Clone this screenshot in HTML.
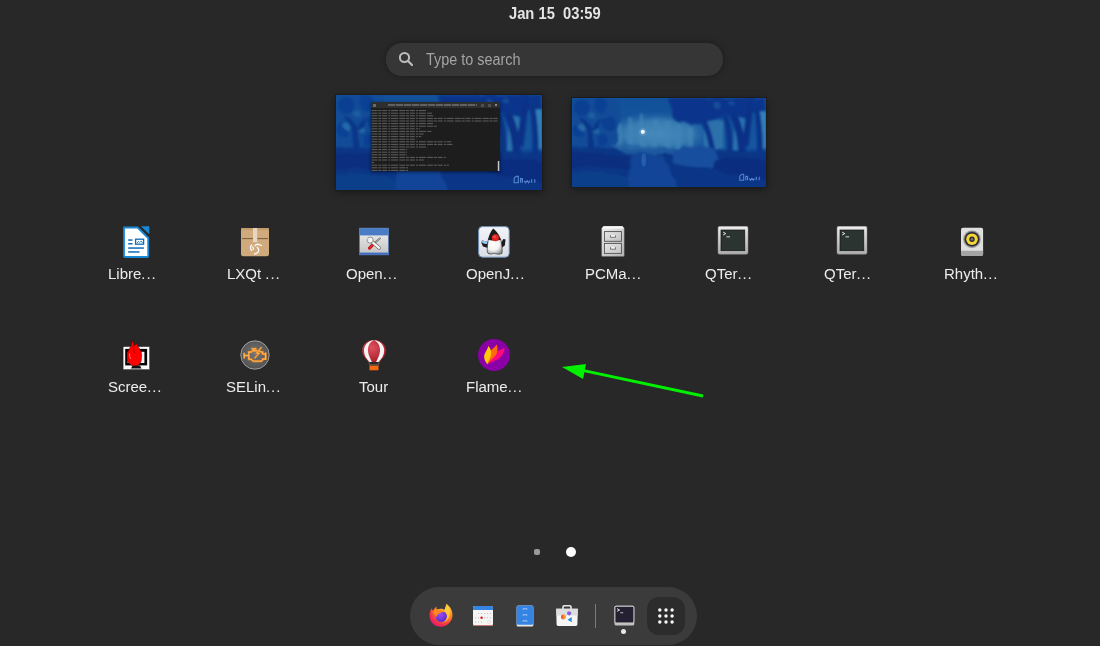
<!DOCTYPE html>
<html><head><meta charset="utf-8">
<style>
html,body{margin:0;padding:0;}
body{width:1100px;height:646px;background:#282828;position:relative;overflow:hidden;font-family:"Liberation Sans",sans-serif;}
.abs{position:absolute;}
#clock{position:absolute;left:508.5px;top:4px;color:#e4e4e4;font-weight:bold;font-size:16px;line-height:20px;white-space:pre;transform:scaleX(0.92);transform-origin:0 0;}
#search{position:absolute;left:385px;top:42px;width:337px;height:33px;border-radius:17px;background:#363636;border:1px solid #222;box-shadow:0 0 6px rgba(0,0,0,0.25);}
#search .ph{position:absolute;left:40px;top:7.8px;color:#a4a4a4;font-size:16px;line-height:18px;white-space:nowrap;transform:scaleX(0.9);transform-origin:0 0;}
.ws{position:absolute;overflow:hidden;outline:1px solid #1c1c1c;box-shadow:0 2px 8px rgba(0,0,0,0.45);}
.lbl{position:absolute;color:#ececec;font-size:15.5px;line-height:16px;white-space:nowrap;transform:scaleX(0.968);transform-origin:0 0;}
.ic{position:absolute;width:32px;height:32px;}
#dock{position:absolute;left:410px;top:587px;width:287px;height:58px;border-radius:29px;background:#3b3b3b;}
</style></head><body>
<div id="clock">Jan 15  03:59</div>
<div id="search">
  <svg class="abs" style="left:10px;top:7px" width="20" height="20" viewBox="0 0 20 20"><circle cx="8.5" cy="7.5" r="4.6" fill="none" stroke="#bdbdbd" stroke-width="2"/><line x1="11.8" y1="10.8" x2="16" y2="15" stroke="#bdbdbd" stroke-width="2.2" stroke-linecap="round"/></svg>
  <div class="ph">Type to search</div>
</div>

<!-- workspace thumbnails -->
<div class="ws" id="ws1" style="left:336px;top:95px;width:206px;height:95px;background:#1a4fb0;"><svg width="100%" height="100%" viewBox="0 0 200 92" preserveAspectRatio="none" style="position:absolute;left:0;top:0">
<defs>
<linearGradient id="WG" x1="0" y1="0" x2="0" y2="1"><stop offset="0" stop-color="#1660b0"/><stop offset="0.55" stop-color="#1a66b4"/><stop offset="0.62" stop-color="#0d44a0"/><stop offset="1" stop-color="#0a3c98"/></linearGradient>
<radialGradient id="WM" cx="0.5" cy="0.5" r="0.5"><stop offset="0" stop-color="#5aa8da"/><stop offset="0.6" stop-color="#4294cc"/><stop offset="1" stop-color="#2a74bc" stop-opacity="0"/></radialGradient>
<filter id="WD" x="-5%" y="-5%" width="110%" height="110%"><feTurbulence type="fractalNoise" baseFrequency="0.09" numOctaves="2" seed="3"/><feDisplacementMap in="SourceGraphic" scale="6"/><feGaussianBlur stdDeviation="1.1"/></filter>
<filter id="WB" x="-5%" y="-5%" width="110%" height="110%"><feGaussianBlur stdDeviation="1"/></filter>
<filter id="WC"><feGaussianBlur stdDeviation="0.5"/></filter>
</defs>
<rect width="200" height="92" fill="url(#WG)"/>
<g filter="url(#WB)">
<ellipse cx="88" cy="37" rx="58" ry="23" fill="url(#WM)"/>
<g fill="#52a0d4" opacity="0.7"><path d="M46 26 h5 l1 28 h-7z"/><path d="M58 20 h4 l1 34 h-6z"/><path d="M70 16 h3 l2 38 h-6z"/><path d="M84 22 h4 v32 h-5z"/><path d="M96 24 h5 v30 h-6z"/><path d="M108 28 h4 l1 26 h-6z"/><path d="M120 30 h5 v24 h-6z"/></g>
</g>
<g filter="url(#WD)">
<path d="M0 0 H44 C50 8 52 18 48 28 C46 38 50 46 44 52 C36 56 24 54 16 56 C8 56 2 54 0 52 Z" fill="#1358ac"/>
<circle cx="10" cy="10" r="8" fill="#0e4aa6"/><circle cx="30" cy="8" r="7" fill="#0f4ca8"/><circle cx="38" cy="26" r="7" fill="#0e48a6"/><circle cx="6" cy="34" r="6" fill="#0f4ca8"/><circle cx="32" cy="44" r="6" fill="#0f4aa8"/>
<circle cx="11" cy="31" r="3" fill="#2f80c4"/><circle cx="25" cy="34" r="3" fill="#2c7cc2"/><circle cx="20" cy="18" r="3.5" fill="#246eb8"/>
<path d="M16 36 L17 60 H23 L22 36 C25 30 28 26 32 24 L31 22 C26 24 22 28 20 31 C18 26 14 22 9 20 L8 22 C12 25 15 30 16 36 Z" fill="#0a3c9a"/>
<path d="M100 0 H200 V12 C194 14 188 16 184 16 C176 20 166 20 158 18 C148 22 138 28 128 28 C118 28 108 22 104 14 C100 8 100 4 100 0 Z" fill="#0b3e9e"/>
<circle cx="112" cy="16" r="9" fill="#0b3e9e"/><circle cx="140" cy="20" r="8" fill="#0b3e9e"/><circle cx="178" cy="14" r="7" fill="#0b3e9e"/>
<circle cx="150" cy="8" r="3" fill="#1e5cb0"/><circle cx="165" cy="6" r="2.5" fill="#1e5cb0"/>
</g>
<g filter="url(#WB)">
<path d="M136 26 C142 22 150 22 156 24 L156 52 L136 54 Z" fill="#3a8cc8" opacity="0.9"/>
<path d="M168 22 C172 20 176 20 178 22 L178 54 L166 54 Z" fill="#3a8ecc" opacity="0.85"/>
<path d="M190 14 H200 V52 H192 Z" fill="#3c9ad6"/>
<path d="M130 20 C136 28 142 46 144 72 H150 C148 46 142 28 136 18 Z" fill="#0a3b9c"/>
<path d="M154 16 C158 26 160 40 160 60 L166 60 C166 40 164 26 160 16 Z" fill="#0b3c9c"/>
<path d="M162 18 C168 28 172 44 172 72 H180 C180 46 176 28 170 16 Z" fill="#0a3898"/>
<path d="M182 6 C180 20 176 32 176 50 L182 50 C184 32 186 20 186 6 Z" fill="#0a3898"/>
<path d="M188 10 C190 26 192 48 190 76 H196 C198 48 196 26 193 10 Z" fill="#0b3a9a"/>
</g>
<g filter="url(#WD)">
<path d="M-4 52 C20 50 40 52 62 54 C84 52 106 52 130 56 C160 54 182 56 204 58 V96 H-4 Z" fill="#0b3c96"/>
<path d="M40 50 C60 48 80 50 100 52 C110 54 120 54 130 56 C110 58 80 58 56 58 Z" fill="#2a74bc" opacity="0.8"/>
<path d="M-4 58 C24 54 46 58 62 62 L58 74 C40 70 20 70 -4 72 Z" fill="#08348c"/>
<path d="M62 58 C72 56 86 58 94 60 C98 68 104 80 110 96 H54 C60 80 62 68 62 58 Z" fill="#1550ac"/>
<path d="M104 54 C116 50 132 48 146 52 C150 60 150 66 146 72 C132 74 118 72 104 68 Z" fill="#1e5cb4"/>
<path d="M146 62 C168 60 188 62 204 66 V86 C184 84 166 80 146 74 Z" fill="#08328e"/>
<path d="M-4 78 C20 74 40 76 58 82 L60 96 H-4 Z" fill="#0f4a9a"/>
<path d="M110 80 C140 78 170 82 204 86 V96 H112 Z" fill="#0b3c98"/>
</g>
<rect width="200" height="92" fill="#061a48" opacity="0.2"/>
<g filter="url(#WC)">
<ellipse cx="74" cy="64" rx="2.5" ry="7" fill="#3e84c8" opacity="0.4"/>
<circle cx="73" cy="35" r="2.1" fill="#f4f8ff"/>
</g>
<circle cx="73" cy="35" r="4" fill="#ffffff" opacity="0.12"/>
<g fill="none" stroke="#5f90dc" stroke-width="1.1" opacity="0.9"><path d="M173 85 V80.5 L175 78.8 H177 V85 Z"/><path d="M179.2 85 V81 H181 V85"/><path d="M182.8 83 L184 85 L185.5 83 L187 85 L188.2 83"/><path d="M190 85 V81.5 M193 85 V81.5"/></g>
</svg><div style="position:absolute;left:34.5px;top:7px;width:129px;height:69px;background:#1d1d1d;box-shadow:0 1px 3px rgba(0,0,0,0.6);">
<div style="position:absolute;left:0;top:0;width:129px;height:6px;background:#2e2e2e"></div>
<div style="position:absolute;left:17.3px;top:2.4px;width:89.4px;height:1.2px;background:repeating-linear-gradient(90deg,#6a6a6a 0 7px,#3e3e3e 7px 8px);opacity:0.85"></div>
<div style="position:absolute;left:2.3px;top:1.5px;width:3px;height:3px;background:#6a6a6a"></div>
<div style="position:absolute;left:110.5px;top:1.5px;width:3px;height:3px;background:#505050"></div>
<div style="position:absolute;left:117.2px;top:1.5px;width:3px;height:3px;background:#505050"></div>
<div style="position:absolute;left:124px;top:2px;width:2px;height:2px;background:#888"></div>
<svg style="position:absolute;left:0;top:6px" width="129" height="63" viewBox="0 0 129 63">
<g stroke="#8a8a8a" stroke-width="1" opacity="0.6" stroke-dasharray="6 0.8 3 0.8 5 1.2 2 0.8 7 1.2"><line x1="0.5" y1="2.6" x2="56.3" y2="2.6"/><line x1="0.5" y1="5.2" x2="61.0" y2="5.2"/><line x1="0.5" y1="7.8" x2="62.3" y2="7.8"/><line x1="0.5" y1="10.4" x2="126.5" y2="10.4"/><line x1="0.5" y1="13.0" x2="126.5" y2="13.0"/><line x1="0.5" y1="15.6" x2="62.3" y2="15.6"/><line x1="0.5" y1="18.2" x2="66.5" y2="18.2"/><line x1="0.5" y1="20.8" x2="49.0" y2="20.8"/><line x1="0.5" y1="23.4" x2="60.5" y2="23.4"/><line x1="0.5" y1="26.0" x2="52.7" y2="26.0"/><line x1="0.5" y1="28.6" x2="50.3" y2="28.6"/><line x1="0.5" y1="31.2" x2="45.5" y2="31.2"/><line x1="0.5" y1="33.8" x2="80.3" y2="33.8"/><line x1="0.5" y1="36.4" x2="81.5" y2="36.4"/><line x1="0.5" y1="39.0" x2="56.3" y2="39.0"/><line x1="0.5" y1="41.6" x2="36.0" y2="41.6"/><line x1="0.5" y1="44.2" x2="36.0" y2="44.2"/><line x1="0.5" y1="46.8" x2="36.0" y2="46.8"/><line x1="0.5" y1="49.4" x2="75.5" y2="49.4"/><line x1="0.5" y1="52.0" x2="52.7" y2="52.0"/><line x1="0.5" y1="54.6" x2="3.0" y2="54.6"/><line x1="0.5" y1="57.2" x2="78.0" y2="57.2"/><line x1="0.5" y1="59.8" x2="37.0" y2="59.8"/><line x1="0.5" y1="62.4" x2="37.0" y2="62.4"/></g>
<rect x="126.8" y="53" width="1.5" height="10" fill="#c8c8c8"/>
</svg>
</div></div>
<div class="ws" id="ws2" style="left:572px;top:98px;width:194px;height:89px;background:#1a4fb0;"><svg width="100%" height="100%" viewBox="0 0 200 92" preserveAspectRatio="none" style="position:absolute;left:0;top:0">
<defs>
<linearGradient id="WGb" x1="0" y1="0" x2="0" y2="1"><stop offset="0" stop-color="#1660b0"/><stop offset="0.55" stop-color="#1a66b4"/><stop offset="0.62" stop-color="#0d44a0"/><stop offset="1" stop-color="#0a3c98"/></linearGradient>
<radialGradient id="WMb" cx="0.5" cy="0.5" r="0.5"><stop offset="0" stop-color="#5aa8da"/><stop offset="0.6" stop-color="#4294cc"/><stop offset="1" stop-color="#2a74bc" stop-opacity="0"/></radialGradient>
<filter id="WDb" x="-5%" y="-5%" width="110%" height="110%"><feTurbulence type="fractalNoise" baseFrequency="0.09" numOctaves="2" seed="3"/><feDisplacementMap in="SourceGraphic" scale="6"/><feGaussianBlur stdDeviation="1.1"/></filter>
<filter id="WBb" x="-5%" y="-5%" width="110%" height="110%"><feGaussianBlur stdDeviation="1"/></filter>
<filter id="WCb"><feGaussianBlur stdDeviation="0.5"/></filter>
</defs>
<rect width="200" height="92" fill="url(#WGb)"/>
<g filter="url(#WBb)">
<ellipse cx="88" cy="37" rx="58" ry="23" fill="url(#WMb)"/>
<g fill="#52a0d4" opacity="0.7"><path d="M46 26 h5 l1 28 h-7z"/><path d="M58 20 h4 l1 34 h-6z"/><path d="M70 16 h3 l2 38 h-6z"/><path d="M84 22 h4 v32 h-5z"/><path d="M96 24 h5 v30 h-6z"/><path d="M108 28 h4 l1 26 h-6z"/><path d="M120 30 h5 v24 h-6z"/></g>
</g>
<g filter="url(#WDb)">
<path d="M0 0 H44 C50 8 52 18 48 28 C46 38 50 46 44 52 C36 56 24 54 16 56 C8 56 2 54 0 52 Z" fill="#1358ac"/>
<circle cx="10" cy="10" r="8" fill="#0e4aa6"/><circle cx="30" cy="8" r="7" fill="#0f4ca8"/><circle cx="38" cy="26" r="7" fill="#0e48a6"/><circle cx="6" cy="34" r="6" fill="#0f4ca8"/><circle cx="32" cy="44" r="6" fill="#0f4aa8"/>
<circle cx="11" cy="31" r="3" fill="#2f80c4"/><circle cx="25" cy="34" r="3" fill="#2c7cc2"/><circle cx="20" cy="18" r="3.5" fill="#246eb8"/>
<path d="M16 36 L17 60 H23 L22 36 C25 30 28 26 32 24 L31 22 C26 24 22 28 20 31 C18 26 14 22 9 20 L8 22 C12 25 15 30 16 36 Z" fill="#0a3c9a"/>
<path d="M100 0 H200 V12 C194 14 188 16 184 16 C176 20 166 20 158 18 C148 22 138 28 128 28 C118 28 108 22 104 14 C100 8 100 4 100 0 Z" fill="#0b3e9e"/>
<circle cx="112" cy="16" r="9" fill="#0b3e9e"/><circle cx="140" cy="20" r="8" fill="#0b3e9e"/><circle cx="178" cy="14" r="7" fill="#0b3e9e"/>
<circle cx="150" cy="8" r="3" fill="#1e5cb0"/><circle cx="165" cy="6" r="2.5" fill="#1e5cb0"/>
</g>
<g filter="url(#WBb)">
<path d="M136 26 C142 22 150 22 156 24 L156 52 L136 54 Z" fill="#3a8cc8" opacity="0.9"/>
<path d="M168 22 C172 20 176 20 178 22 L178 54 L166 54 Z" fill="#3a8ecc" opacity="0.85"/>
<path d="M190 14 H200 V52 H192 Z" fill="#3c9ad6"/>
<path d="M130 20 C136 28 142 46 144 72 H150 C148 46 142 28 136 18 Z" fill="#0a3b9c"/>
<path d="M154 16 C158 26 160 40 160 60 L166 60 C166 40 164 26 160 16 Z" fill="#0b3c9c"/>
<path d="M162 18 C168 28 172 44 172 72 H180 C180 46 176 28 170 16 Z" fill="#0a3898"/>
<path d="M182 6 C180 20 176 32 176 50 L182 50 C184 32 186 20 186 6 Z" fill="#0a3898"/>
<path d="M188 10 C190 26 192 48 190 76 H196 C198 48 196 26 193 10 Z" fill="#0b3a9a"/>
</g>
<g filter="url(#WDb)">
<path d="M-4 52 C20 50 40 52 62 54 C84 52 106 52 130 56 C160 54 182 56 204 58 V96 H-4 Z" fill="#0b3c96"/>
<path d="M40 50 C60 48 80 50 100 52 C110 54 120 54 130 56 C110 58 80 58 56 58 Z" fill="#2a74bc" opacity="0.8"/>
<path d="M-4 58 C24 54 46 58 62 62 L58 74 C40 70 20 70 -4 72 Z" fill="#08348c"/>
<path d="M62 58 C72 56 86 58 94 60 C98 68 104 80 110 96 H54 C60 80 62 68 62 58 Z" fill="#1550ac"/>
<path d="M104 54 C116 50 132 48 146 52 C150 60 150 66 146 72 C132 74 118 72 104 68 Z" fill="#1e5cb4"/>
<path d="M146 62 C168 60 188 62 204 66 V86 C184 84 166 80 146 74 Z" fill="#08328e"/>
<path d="M-4 78 C20 74 40 76 58 82 L60 96 H-4 Z" fill="#0f4a9a"/>
<path d="M110 80 C140 78 170 82 204 86 V96 H112 Z" fill="#0b3c98"/>
</g>
<rect width="200" height="92" fill="#061a48" opacity="0.2"/>
<g filter="url(#WCb)">
<ellipse cx="74" cy="64" rx="2.5" ry="7" fill="#3e84c8" opacity="0.4"/>
<circle cx="73" cy="35" r="2.1" fill="#f4f8ff"/>
</g>
<circle cx="73" cy="35" r="4" fill="#ffffff" opacity="0.12"/>
<g fill="none" stroke="#5f90dc" stroke-width="1.1" opacity="0.9"><path d="M173 85 V80.5 L175 78.8 H177 V85 Z"/><path d="M179.2 85 V81 H181 V85"/><path d="M182.8 83 L184 85 L185.5 83 L187 85 L188.2 83"/><path d="M190 85 V81.5 M193 85 V81.5"/></g>
</svg></div>

<!-- app grid -->
<svg class="ic" style="left:120px;top:226px" viewBox="0 0 32 32">
 <path d="M4 1.5 H17.6 L28.2 12 V30 Q28.2 31 27.2 31 H5 Q4 31 4 30 Z" fill="#fff" stroke="#1a87d4" stroke-width="1.8" stroke-linejoin="round"/>
 <path d="M20.8 0.2 H29.3 V8.2 Z" fill="#1a87d4"/>
 <g fill="#0e6cb8"><rect x="8.2" y="13.3" width="4.3" height="1.5"/><rect x="8.2" y="17" width="4.3" height="1.5"/><rect x="8.2" y="21.3" width="15.7" height="1.5"/><rect x="8.2" y="25.2" width="11.3" height="1.5"/></g>
 <rect x="15.6" y="13.2" width="8" height="5" fill="#fff" stroke="#0e6cb8" stroke-width="1.3"/>
 <path d="M17 17 l1.5-1.6 l1.2 1 l1.5-1.4 l1.5 2" fill="none" stroke="#0e6cb8" stroke-width="0.8"/>
</svg>
<svg class="ic" style="left:239px;top:226px" viewBox="0 0 32 32">
 <rect x="2" y="2" width="28" height="28.2" rx="2.2" fill="#d0aa7c"/>
 <rect x="2" y="2" width="28" height="2" rx="1" fill="#c49d6d"/>
 <rect x="3" y="12.2" width="26" height="0.9" fill="#6e5434"/>
 <rect x="14" y="2" width="4.2" height="14.2" fill="#e6d6bd"/>
 <path d="M12.6 19 C11.2 20 11 22.5 12.6 24.6 M13.6 21 C14.5 21.6 14.8 22.6 14.1 23.4 M16 19.8 C16.8 18.2 19 17.8 20.6 18.9 L22.6 19.5 M18.3 21.2 C19.6 22.6 20 24.6 19 26.2 C18 27.6 16.6 27.9 15.3 27.9" fill="none" stroke="#fbfaf6" stroke-width="1.3" stroke-linecap="round"/>
</svg>
<svg class="ic" style="left:359px;top:226px" viewBox="0 0 32 32">
 <defs><linearGradient id="og" x1="0" y1="0" x2="0" y2="1"><stop offset="0" stop-color="#f0f0f0"/><stop offset="1" stop-color="#c2c2c2"/></linearGradient></defs>
 <rect x="0.5" y="2.2" width="29" height="26.6" fill="url(#og)" stroke="#5a7db8" stroke-width="0.8"/>
 <rect x="0.5" y="2.2" width="29" height="7.2" fill="#4b7cc6"/>
 <rect x="0.5" y="26.6" width="29" height="2.2" fill="#3f6ec0"/>
 <g transform="translate(15.5 17.5) scale(0.86) translate(-15.5 -16.5)"><path d="M21.8 10.5 L14.5 16.8" stroke="#6a6a6a" stroke-width="2" stroke-linecap="round"/>
 <path d="M21.8 10.5 L14.5 16.8" stroke="#c8c8c8" stroke-width="0.8" stroke-linecap="round"/>
 <path d="M15.2 16.2 L9.6 22" stroke="#a00" stroke-width="3.4" stroke-linecap="round"/>
 <path d="M15.2 16.2 L9.6 22" stroke="#f22" stroke-width="2" stroke-linecap="round"/>
 <path d="M11 13.2 L20.8 21.6" stroke="#6a6a6a" stroke-width="4" stroke-linecap="round"/>
 <path d="M11 13.2 L20.8 21.6" stroke="#f6f6f6" stroke-width="2.6" stroke-linecap="round"/>
 <circle cx="10.4" cy="12.5" r="3.5" fill="#f6f6f6" stroke="#6a6a6a" stroke-width="0.8"/>
 <path d="M7.2 9.6 L10.6 12.6 L8 13.6 Z" fill="#e2e2e2"/></g>
</svg>
<svg class="ic" style="left:478px;top:226px" viewBox="0 0 32 32">
 <defs><linearGradient id="jg" x1="0" y1="0" x2="0" y2="1"><stop offset="0" stop-color="#f4f5fa"/><stop offset="1" stop-color="#d9dde6"/></linearGradient></defs>
 <rect x="0.6" y="0.6" width="30.6" height="30.6" rx="4" fill="url(#jg)" stroke="#6f8fb4" stroke-width="1"/>
 <defs><radialGradient id="dk" cx="0.4" cy="0.35" r="0.75"><stop offset="0" stop-color="#ffffff"/><stop offset="0.55" stop-color="#f2f2f2"/><stop offset="1" stop-color="#8a8a8a"/></radialGradient></defs>
 <path d="M10.6 16 L4 14.6 L3.4 17 L5 20.5 L10 22 Z" fill="#1a1a1a"/>
 <ellipse cx="6.8" cy="16.4" rx="3" ry="1.5" fill="#8ec6f4" transform="rotate(12 6.8 16.4)"/>
 <path d="M22.6 17.5 L25.4 13 L27.6 13.4 L26.8 19.4 L23.5 22 Z" fill="#1a1a1a"/>
 <path d="M10.5 12.8 C9.6 17 9 22 9.3 25.8 C9.6 28 12 28.4 14 27.8 C15.2 27.3 16.2 27.2 17.2 27.6 C19.2 28.4 22.2 28.4 24 27.4 C24.6 23.5 23.8 17.5 22.6 12.8 Z" fill="url(#dk)" stroke="#222" stroke-width="0.6"/>
 <path d="M15.3 2.6 C13 5 11 9 10 13.8 C12 14.8 20 14.8 22.8 13.8 C21.8 10 19 5.5 15.3 2.6 Z" fill="#1c1c1c"/>
 <circle cx="17.4" cy="11.8" r="3.5" fill="#e52424"/>
 <circle cx="16.6" cy="10.8" r="1.2" fill="#ff6a6a" opacity="0.7"/>
</svg>
<svg class="ic" style="left:597px;top:226px" viewBox="0 0 32 32">
 <defs><linearGradient id="pg" x1="0" y1="0" x2="1" y2="1"><stop offset="0" stop-color="#f2f2f2"/><stop offset="1" stop-color="#b4b4b4"/></linearGradient>
 <linearGradient id="pg2" x1="0" y1="0" x2="1" y2="1"><stop offset="0" stop-color="#e8e8e8"/><stop offset="1" stop-color="#c0c0c0"/></linearGradient></defs>
 <path d="M6.6 0.2 H25.4 L27.1 2.4 V30.2 H4.8 V2.4 Z" fill="url(#pg)" stroke="#9a9a9a" stroke-width="0.5"/>
 <path d="M6.6 0.2 H25.4 L27.1 2.4 H4.8 Z" fill="#fafafa"/>
 <rect x="7.4" y="5.6" width="17.1" height="9.7" fill="url(#pg2)" stroke="#505050" stroke-width="0.9"/>
 <rect x="7.4" y="17.4" width="17.1" height="10" fill="url(#pg2)" stroke="#505050" stroke-width="0.9"/>
 <path d="M13.5 9.3 V11.3 H18.5 V9.3" fill="#f8f8f8" stroke="#666" stroke-width="0.9"/>
 <path d="M13.5 21.2 V23.2 H18.5 V21.2" fill="#f8f8f8" stroke="#666" stroke-width="0.9"/>
</svg>
<svg class="ic" style="left:717px;top:226px" viewBox="0 0 32 32">
 <defs><linearGradient id="tg" x1="0" y1="0" x2="0" y2="1"><stop offset="0" stop-color="#eeeeee"/><stop offset="1" stop-color="#adadad"/></linearGradient></defs>
 <rect x="1" y="0.2" width="30" height="28" rx="1.6" fill="url(#tg)" stroke="#8a8a8a" stroke-width="0.5"/>
 <rect x="4" y="4" width="23.8" height="20.7" fill="#2c3431" stroke="#151515" stroke-width="0.7"/>
 <path d="M6.2 6.2 L8.8 7.6 L6.2 9" fill="none" stroke="#e6e6e6" stroke-width="1"/>
 <rect x="9.4" y="10.4" width="3.6" height="0.9" fill="#e6e6e6"/>
</svg>
<svg class="ic" style="left:836px;top:226px" viewBox="0 0 32 32">
 <rect x="1" y="0.2" width="30" height="28" rx="1.6" fill="url(#tg)" stroke="#8a8a8a" stroke-width="0.5"/>
 <rect x="4" y="4" width="23.8" height="20.7" fill="#2c3431" stroke="#151515" stroke-width="0.7"/>
 <path d="M6.2 6.2 L8.8 7.6 L6.2 9" fill="none" stroke="#e6e6e6" stroke-width="1"/>
 <rect x="9.4" y="10.4" width="3.6" height="0.9" fill="#e6e6e6"/>
</svg>
<svg class="ic" style="left:955px;top:226px" viewBox="0 0 32 32">
 <rect x="6" y="1.8" width="22.1" height="28.3" rx="2" fill="#dfdfde"/>
 <path d="M6 24.7 H28.1 V28.1 Q28.1 30.1 26.1 30.1 H8 Q6 30.1 6 28.1 Z" fill="#a4a4a4"/>
 <circle cx="17" cy="13.2" r="9" fill="#7a7a7a" opacity="0.45"/>
 <circle cx="17" cy="13.2" r="8.2" fill="#5a5a5a" opacity="0.6"/>
 <circle cx="17" cy="13.2" r="7.3" fill="#2a2638"/>
 <circle cx="17" cy="13.2" r="5.8" fill="#f6d835"/>
 <circle cx="17" cy="13.2" r="2.7" fill="#2a2638"/>
 <circle cx="17" cy="13.2" r="1.3" fill="#777"/>
</svg>

<svg class="ic" style="left:120px;top:339px" viewBox="0 0 32 32">
 <rect x="3.1" y="7.6" width="26.5" height="23" fill="#fafafa" stroke="#111" stroke-width="0.4"/>
 <rect x="5.2" y="9.9" width="21.9" height="16.5" fill="#050505"/>
 <rect x="7.6" y="12.8" width="16.8" height="11.2" fill="#f4f4f4"/>
 <path d="M12.5 26.4 H20 L21.5 29.6 H11 Z" fill="#111"/>
 <path d="M11.8 1 C13 2.5 14 4.5 13.9 6.5 C15 5.5 16.5 5 17.4 4.5 C17.2 6 17.8 7.5 18.8 8.6 C20.5 11 21.8 13.5 21.6 16.3 C21.5 19 21.5 20.5 21.2 21.9 C20.2 24.8 18.5 26.6 16 26.8 C13.5 27 11.5 26.5 10.4 25.4 C8 23.5 6.8 21 6.9 18.4 C7 16 7.5 14 8 12.1 C8.8 10.5 9.8 9 10.4 7.9 C11.2 6.5 12 4 11.8 1 Z" fill="#ff0000" stroke="#300" stroke-width="0.45"/>
 <path d="M9.6 14.5 C9.2 16.5 9.8 18.5 11 20" fill="none" stroke="#ddd" stroke-width="0.6"/>
 <path d="M13.9 6.5 C13.4 9 13.6 11.5 14.6 14" fill="none" stroke="#500" stroke-width="0.5"/>
</svg>
<svg class="ic" style="left:239px;top:339px" viewBox="0 0 32 32">
 <defs><radialGradient id="sg" cx="0.5" cy="0.45" r="0.6"><stop offset="0" stop-color="#767676"/><stop offset="0.8" stop-color="#555"/><stop offset="1" stop-color="#4a4a4a"/></radialGradient></defs>
 <circle cx="16" cy="16" r="14.2" fill="url(#sg)" stroke="#a8a8a8" stroke-width="0.9"/>
 <path d="M9.8 13 H12.5 L13.8 11.8 H20.5 L21.5 13 H23.6 V15 H26.6 V20 H23.6 V21 L22.2 22.2 H14.2 L12.2 20.2 H9.8 Z M5.2 13.8 V19.4 M5.2 16.6 H9.8 M12.4 9.8 H17.4 M14.9 9.8 V11.8 M26.6 13.6 V21" fill="none" stroke="#f08a1a" stroke-width="2" stroke-linejoin="miter"/>
 <path d="M9.8 13 H12.5 L13.8 11.8 H20.5 L21.5 13 H23.6 V15 H26.6 V20 H23.6 V21 L22.2 22.2 H14.2 L12.2 20.2 H9.8 Z M5.2 13.8 V19.4 M5.2 16.6 H9.8 M12.4 9.8 H17.4 M14.9 9.8 V11.8 M26.6 13.6 V21" fill="none" stroke="#ffc47a" stroke-width="0.7" stroke-linejoin="miter"/>
 <path d="M22.6 8 L17.6 14.2 H20.2 L15.4 19.4" fill="none" stroke="#e07a14" stroke-width="1.8"/>
 <path d="M22.6 8 L17.6 14.2 H20.2 L15.4 19.4" fill="none" stroke="#ffd08a" stroke-width="0.7"/>
</svg>
<svg class="ic" style="left:359px;top:339px" viewBox="0 0 32 32">
 <defs><radialGradient id="bg1" cx="0.4" cy="0.35" r="0.65"><stop offset="0" stop-color="#e05060"/><stop offset="1" stop-color="#a8202a"/></radialGradient></defs>
 <path d="M15 1 C21.5 1 27 5.5 27 11.5 C27 16 23.5 19.5 20.5 23 H9.5 C6.5 19.5 3.2 16 3.2 11.5 C3.2 5.5 8.5 1 15 1 Z" fill="url(#bg1)"/>
 <path d="M15 1 C10.5 3 8.6 8 9 12 C9.4 16.5 11.5 20 13 23 H10.5 C7 19.5 5 16 5 11.5 C5 6 9 2 15 1 Z" fill="#f4f4f4"/>
 <path d="M15 1 C19.5 3 21.4 8 21 12 C20.6 16.5 18.5 20 17 23 H19.5 C23 19.5 25.2 16 25.2 11.5 C25.2 6 21 2 15 1 Z" fill="#f4f4f4"/>
 <path d="M9.5 22.5 L11.2 26.2 M20.5 22.5 L18.8 26.2" stroke="#777" stroke-width="0.7"/>
 <rect x="10.5" y="25.5" width="9" height="5.8" fill="#f26a12"/>
 <rect x="10.5" y="25.5" width="9" height="1.2" fill="#444"/>
</svg>
<svg class="ic" style="left:478px;top:339px" viewBox="0 0 32 32">
 <circle cx="16" cy="16" r="16" fill="#8a00a6"/>
 <path d="M26.8 9 C23 10.5 18.5 12 15.5 15 C12.5 18 10.8 21.5 9.4 25.2 C13 23 17 22 20.5 20 C24 17.5 26 13.5 26.8 9 Z" fill="#ff0a7a"/>
 <path d="M18.8 5.5 C17 8.5 13.5 10 11.5 13 C9.5 16.5 9 21 9.4 25.2 C11.5 21.5 15 19.5 17.5 16.5 C20 13 19.8 8.5 18.8 5.5 Z" fill="#ff6a0c"/>
 <path d="M10.4 6.9 C9.8 10 7.2 12.5 6.3 16 C5.5 19.5 7.5 23 9.4 25.2 C10.2 22 12.2 19.5 13 16 C13.8 12.5 12.5 9 10.4 6.9 Z" fill="#ffc80a"/>
</svg>
<div class="lbl" style="left:108.1px;top:266px">Libre<span style="letter-spacing:0.9px">...</span></div>
<div class="lbl" style="left:226.9px;top:266px">LXQt <span style="letter-spacing:0.9px">...</span></div>
<div class="lbl" style="left:345.8px;top:266px">Open<span style="letter-spacing:0.9px">...</span></div>
<div class="lbl" style="left:465.8px;top:266px">OpenJ<span style="letter-spacing:0.9px">...</span></div>
<div class="lbl" style="left:584.7px;top:266px">PCMa<span style="letter-spacing:0.9px">...</span></div>
<div class="lbl" style="left:704.7px;top:266px">QTer<span style="letter-spacing:0.9px">...</span></div>
<div class="lbl" style="left:823.6px;top:266px">QTer<span style="letter-spacing:0.9px">...</span></div>
<div class="lbl" style="left:943.6px;top:266px">Rhyth<span style="letter-spacing:0.9px">...</span></div>
<div class="lbl" style="left:107.9px;top:378.9px">Scree<span style="letter-spacing:0.9px">...</span></div>
<div class="lbl" style="left:226.4px;top:378.9px">SELin<span style="letter-spacing:0.9px">...</span></div>
<div class="lbl" style="left:358.7px;top:378.9px">Tour</div>
<div class="lbl" style="left:465.8px;top:378.9px">Flame<span style="letter-spacing:0.9px">...</span></div>

<!-- page dots -->
<div class="abs" style="left:534px;top:549px;width:6px;height:6px;border-radius:2px;background:#9a9a9a"></div>
<div class="abs" style="left:566px;top:547px;width:10px;height:10px;border-radius:50%;background:#fff"></div>

<!-- dock -->
<div id="dock"></div>
<svg class="abs" style="left:425px;top:599px" width="32" height="32" viewBox="0 0 32 32">
 <defs>
  <radialGradient id="ff1" cx="0.7" cy="0.2" r="0.9"><stop offset="0" stop-color="#ffe14a"/><stop offset="0.45" stop-color="#ff8a1e"/><stop offset="0.8" stop-color="#f0304a"/><stop offset="1" stop-color="#e31587"/></radialGradient>
  <radialGradient id="ff2" cx="0.4" cy="0.3" r="0.7"><stop offset="0" stop-color="#9a4af0"/><stop offset="1" stop-color="#5a2ed0"/></radialGradient>
 </defs>
 <path d="M21.5 4.8 C24.5 7 27.2 10.5 27.5 15.5 C27.8 22 22.5 27.8 16 27.8 C9.5 27.8 4.5 22.8 4.5 16.5 C4.5 13.5 5.5 11 7 9 C7 10.5 7.5 11.5 8.3 12 C8.8 10 10 8.5 11.5 7.5 C11 9 11.5 10 12.3 10.5 C14.5 9.5 17.5 9.5 19.5 11 C20.5 8.5 21.2 6.5 21.5 4.8 Z" fill="url(#ff1)"/>
 <circle cx="16.3" cy="17.5" r="5.6" fill="url(#ff2)"/>
 <path d="M7.8 12.2 C10.5 10.2 16 9.8 20 12.6 C18 13 16.2 13.4 14.6 14.2 C12.8 15.2 11.8 16.6 11.4 18 C9.8 16.2 8.6 14.2 7.8 12.2 Z" fill="#ff8a24"/>
 <path d="M21.5 4.8 C23.5 9 25 12 24.5 16 C24 20 21.5 22.5 18 23.5 C22 21 23 17 21.5 13.5 C21 12 20.2 11.5 19.5 11 C20.5 8.5 21.2 6.5 21.5 4.8 Z" fill="#ffc93a" opacity="0.85"/>
</svg>
<svg class="abs" style="left:473px;top:606px" width="20" height="20" viewBox="0 0 20 20">
 <rect x="0" y="0" width="20" height="20" rx="2" fill="#f6f5f4"/>
 <path d="M0 2 Q0 0 2 0 H18 Q20 0 20 2 V4 H0 Z" fill="#3584e4"/>
 <path d="M0 18 Q0 20 2 20 H18 Q20 20 20 18 V19 H0 Z" fill="#c07070"/>
 <rect x="0" y="19.2" width="20" height="0.8" fill="#c67a7a"/>
 <g fill="#b8b8b8"><circle cx="5.6" cy="7.5" r="0.6"/><circle cx="8.5" cy="7.5" r="0.6"/><circle cx="11.5" cy="7.5" r="0.6"/><circle cx="14.5" cy="7.5" r="0.6"/><circle cx="17.5" cy="7.5" r="0.6"/>
 <circle cx="2.6" cy="11.8" r="0.6"/><circle cx="5.6" cy="11.8" r="0.6"/><circle cx="11.5" cy="11.8" r="0.6"/><circle cx="14.5" cy="11.8" r="0.6"/><circle cx="17.5" cy="11.8" r="0.6"/>
 <circle cx="2.6" cy="16" r="0.6"/><circle cx="5.6" cy="16" r="0.6"/><circle cx="8.5" cy="16" r="0.6"/></g>
 <circle cx="8.6" cy="11.8" r="1.3" fill="#e01b24"/>
 <circle cx="16" cy="16" r="1.6" fill="none" stroke="#cfcfcf" stroke-width="0.4"/>
</svg>
<svg class="abs" style="left:516px;top:605px" width="18" height="22" viewBox="0 0 18 22">
 <rect x="0.6" y="0.4" width="16.8" height="21.2" rx="1.5" fill="#ebe8e4"/>
 <rect x="0.6" y="0.4" width="16.8" height="19.4" rx="1.5" fill="#3584e4"/>
 <g fill="none" stroke="#c8d8f0" stroke-width="0.8"><path d="M7 4.6 v-0.8 h4 v0.8"/><path d="M7 10.6 v-0.8 h4 v0.8"/><path d="M7 16.6 v-0.8 h4 v0.8"/></g>
</svg>
<svg class="abs" style="left:555px;top:605px" width="24" height="22" viewBox="0 0 24 22">
 <path d="M8 4 V2 Q8 0.8 9.2 0.8 H14.8 Q16 0.8 16 2 V4" fill="none" stroke="#e8e8e8" stroke-width="1.6"/>
 <path d="M1.2 3.8 H22.8 L22.4 19.6 Q22.3 21 21 21 H3 Q1.7 21 1.6 19.6 Z" fill="#f6f6f6"/>
 <path d="M1.2 3.8 H22.8 L22.6 10.5 H1.4 Z" fill="#dddddd"/>
 <circle cx="8.3" cy="12" r="2.4" fill="#ed5b30"/>
 <path d="M8.3 9.6 A2.4 2.4 0 0 1 8.3 14.4 Z" fill="#f6a030"/>
 <circle cx="14.1" cy="8.3" r="2.1" fill="#8a5ce8"/>
 <path d="M16.7 12.1 V17.3 L12.6 14.7 Z" fill="#2a86d8"/>
</svg>
<div class="abs" style="left:595px;top:604px;width:1px;height:24px;background:#7a7a7a"></div>
<svg class="abs" style="left:614px;top:605px" width="21" height="21" viewBox="0 0 21 21">
 <rect x="0.5" y="0.8" width="19.8" height="19.8" rx="1.6" fill="#c0bfbc"/>
 <rect x="0.5" y="0.8" width="19.8" height="17.5" rx="1.6" fill="#d8d6d3"/>
 <rect x="1.4" y="1.7" width="18" height="15.8" rx="0.8" fill="#241f31"/>
 <path d="M3 3.6 L5.6 5 L3 6.4" fill="none" stroke="#f0f0f0" stroke-width="0.9"/>
 <rect x="6.2" y="7.4" width="3" height="0.8" fill="#e0e0e0"/>
</svg>
<div class="abs" style="left:621px;top:629px;width:5px;height:5px;border-radius:50%;background:#e8e8e8"></div>
<div class="abs" style="left:647px;top:597px;width:38px;height:38px;border-radius:12px;background:#2c2c2c"></div>
<svg class="abs" style="left:647px;top:597px" width="38" height="38" viewBox="0 0 38 38"><g fill="#fafafa">
<circle cx="12.8" cy="13" r="1.7"/><circle cx="19" cy="13" r="1.7"/><circle cx="25.1" cy="13" r="1.7"/>
<circle cx="12.8" cy="19" r="1.7"/><circle cx="19" cy="19" r="1.7"/><circle cx="25.1" cy="19" r="1.7"/>
<circle cx="12.8" cy="25" r="1.7"/><circle cx="19" cy="25" r="1.7"/><circle cx="25.1" cy="25" r="1.7"/></g></svg>

<!-- arrow -->
<svg class="abs" style="left:0;top:0" width="1100" height="646"><line x1="703" y1="396" x2="579" y2="369.6" stroke="#00f000" stroke-width="3"/><polygon points="562,367 586,364 583,379" fill="#00f000"/></svg>
</body></html>
